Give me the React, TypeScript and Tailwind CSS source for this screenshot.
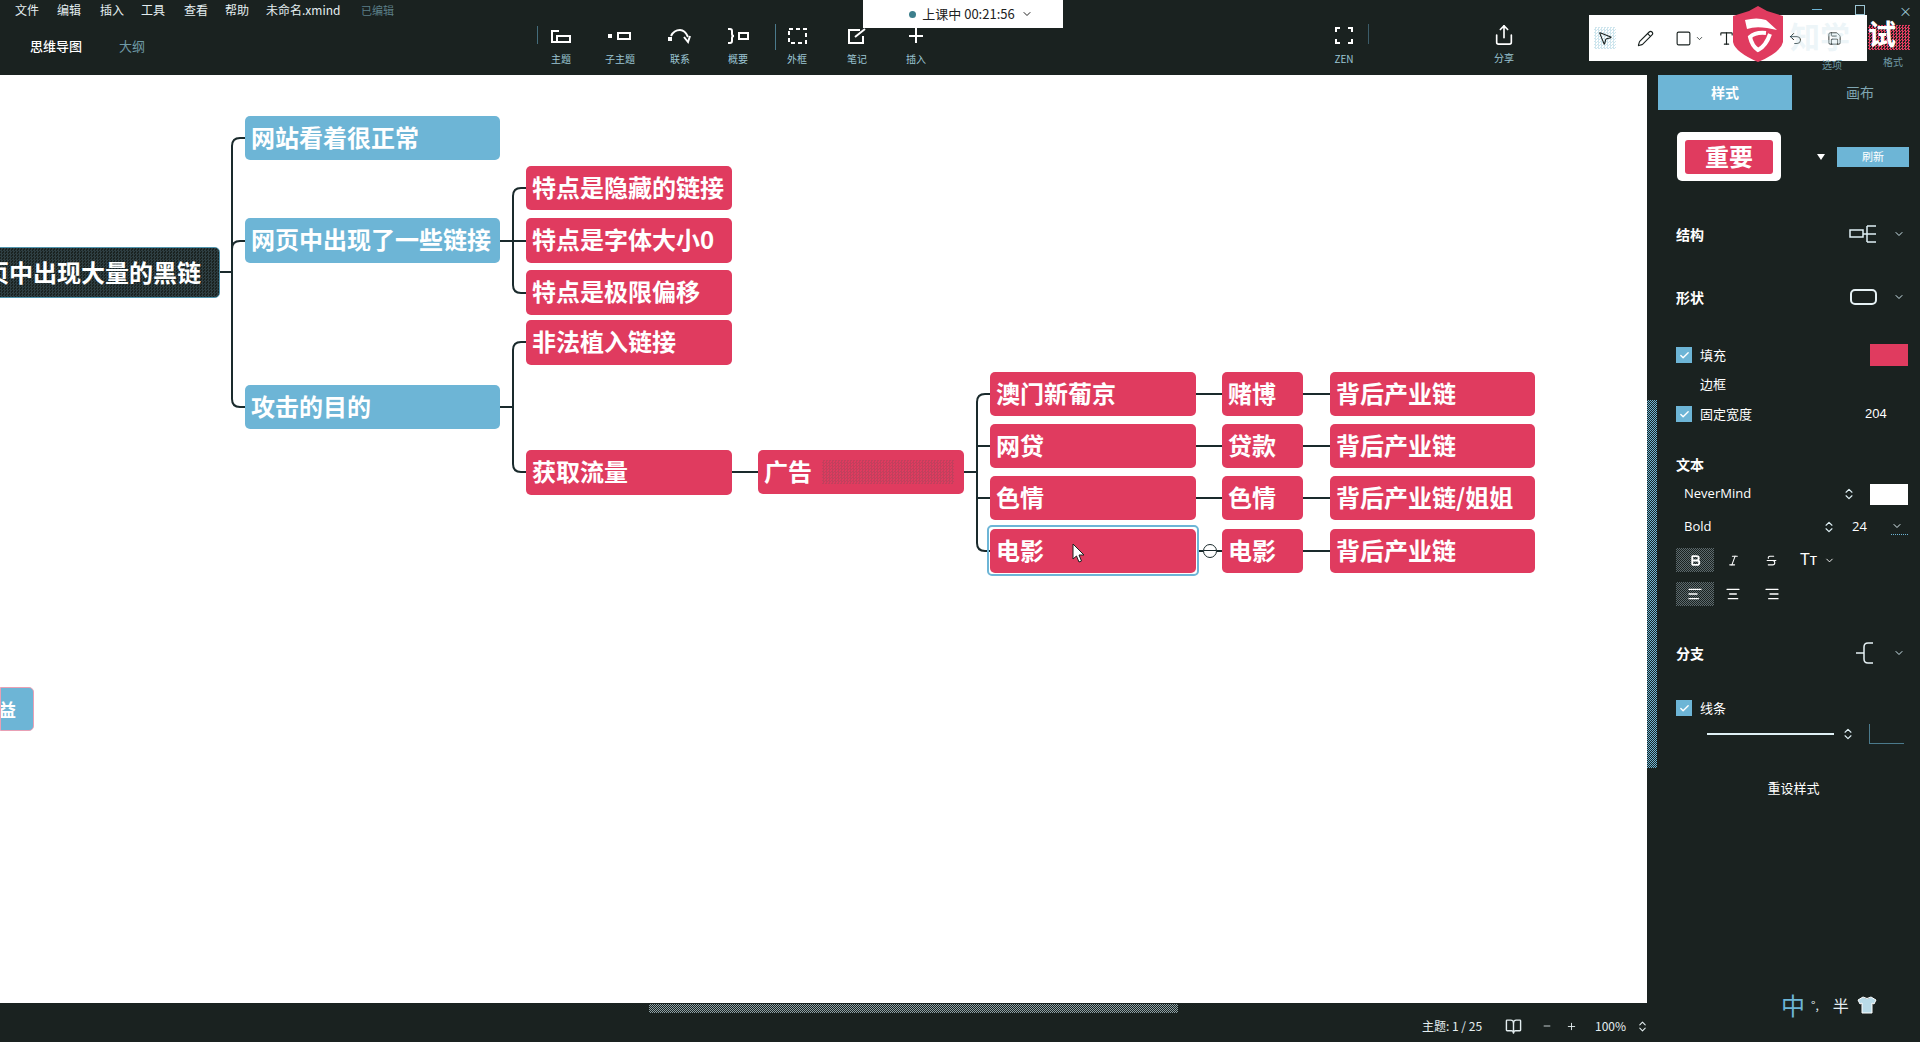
import { ChevronDown, ChevronsUpDown, Plus, Minus, MousePointer2, Pencil, Square, Type, Undo2, BookOpen, Bold, Italic, Strikethrough, AlignLeft, AlignCenter, AlignRight, Check, Share, Save } from 'lucide-react';

const RED = 'bg-[#e03b5f]';
const BLUE = 'bg-[#6db5d6]';

// canvas starts at y=75
const NODES: [string, number, number, number, number, string][] = [
  ['网站看着很正常', 245, 41, 255, 44, BLUE],
  ['网页中出现了一些链接', 245, 143, 255, 45, BLUE],
  ['攻击的目的', 245, 310, 255, 44, BLUE],
  ['特点是隐藏的链接', 526, 91, 206, 44, RED],
  ['特点是字体大小0', 526, 143, 206, 45, RED],
  ['特点是极限偏移', 526, 195, 206, 45, RED],
  ['非法植入链接', 526, 245, 206, 45, RED],
  ['获取流量', 526, 375, 206, 45, RED],
  ['广告', 758, 375, 206, 44, RED],
  ['澳门新葡京', 990, 297, 206, 44, RED],
  ['网贷', 990, 349, 206, 44, RED],
  ['色情', 990, 401, 206, 44, RED],
  ['电影', 990, 454, 206, 44, RED],
  ['赌博', 1222, 297, 81, 44, RED],
  ['贷款', 1222, 349, 81, 44, RED],
  ['色情', 1222, 401, 81, 44, RED],
  ['电影', 1222, 454, 81, 44, RED],
  ['背后产业链', 1330, 297, 205, 44, RED],
  ['背后产业链', 1330, 349, 205, 44, RED],
  ['背后产业链/姐姐', 1330, 401, 205, 44, RED],
  ['背后产业链', 1330, 454, 205, 44, RED],
];

const LINES = [
  'M220 197 H232',
  'M245 63 H240 Q232 63 232 71 V324 Q232 332 240 332 H245',
  'M232 174 Q232 166 240 166 H245',
  'M500 166 H526',
  'M526 113 H521 Q513 113 513 121 V210 Q513 218 521 218 H526',
  'M500 332 H513',
  'M526 267 H521 Q513 267 513 275 V389 Q513 397 521 397 H526',
  'M731 397 H758',
  'M963 397 H976',
  'M990 319 H985 Q977 319 977 327 V468 Q977 476 985 476 H990',
  'M977 371 H990',
  'M977 423 H990',
  'M1196 319 H1222 M1196 371 H1222 M1196 423 H1222 M1303 319 H1330 M1303 371 H1330 M1303 423 H1330 M1303 476 H1330',
  'M1199 476 H1203 M1217 476 H1222',
];

const TOOLS: [string, number][] = [
  ['主题', 561], ['子主题', 620], ['联系', 680], ['概要', 738], ['外框', 797], ['笔记', 857], ['插入', 916],
];

function ToolIcon({ name }: { name: string }) {
  const p = { fill: 'none', stroke: 'white', strokeWidth: 2 };
  return (
    <svg width="24" height="24" viewBox="0 0 24 24">
      {name === '主题' && <><path d="M10 7 H3 V18 H7" {...p} /><rect x="8" y="12" width="13" height="6" {...p} /></>}
      {name === '子主题' && <><rect x="0" y="10" width="4" height="4" fill="white" /><rect x="10" y="9" width="12" height="6" {...p} /></>}
      {name === '联系' && <><path d="M3 12 Q6 6 12 6 Q17 6 20 13" {...p} /><rect x="0" y="13" width="4" height="4" fill="white" /><path d="M16 13 L20 18 L22 12" {...p} /></>}
      {name === '概要' && <><path d="M2 5 H4 Q6 5 6 7 V10 Q6 12 8 12 Q6 12 6 14 V17 Q6 19 4 19 H2" {...p} /><rect x="13" y="9" width="9" height="6" {...p} /></>}
      {name === '外框' && <rect x="4" y="5" width="17" height="14" {...p} strokeDasharray="4 3" />}
      {name === '笔记' && <path d="M15 6 H4 V19 H18 V12 M10 13 L20 5" {...p} />}
      {name === '插入' && <path d="M12 4 V19 M5 12 H19" {...p} />}
    </svg>
  );
}

function Tick({ className }: { className: string }) {
  return (
    <div className={`flex h-4 w-4 items-center justify-center bg-[#6db5d6] ${className}`}>
      <Check size={11} color="white" strokeWidth={3} />
    </div>
  );
}

export default function App() {
  return (
    <div className="relative flex h-screen w-full flex-col overflow-hidden bg-[#1a2220] font-['Noto_Sans_CJK_SC','Liberation_Sans',sans-serif] text-white">
      {/* top bar */}
      <header className="relative h-[75px] shrink-0">
        <div className="flex h-[20px] items-center pl-[15px] text-[12px] text-[#e4eef0]">
          <span className="w-[42px]">文件</span>
          <span className="w-[43px]">编辑</span>
          <span className="w-[41px]">插入</span>
          <span className="w-[43px]">工具</span>
          <span className="w-[41px]">查看</span>
          <span className="w-[41px]">帮助</span>
          <span className="w-[95px]">未命名.xmind</span>
          <span className="text-[11px] text-[#5c7f88]">已编辑</span>
        </div>
        <div className="flex items-center pl-[30px] pt-[16px] text-[13px]">
          <span className="w-[89px] font-medium">思维导图</span>
          <span className="text-[#6f9aa6]">大纲</span>
        </div>

        {TOOLS.map(([label, x]) => (
          <div key={label} className="absolute top-[24px] flex w-[50px] -translate-x-1/2 flex-col items-center" style={{ left: x }}>
            <ToolIcon name={label} />
            <span className="mt-[3px] text-[10px] text-[#9cc6d4]">{label}</span>
          </div>
        ))}
        <div className="absolute left-[1332px] top-[24px] flex w-[24px] flex-col items-center">
          <svg width="24" height="24" viewBox="0 0 24 24" fill="none" stroke="white" strokeWidth="2">
            <path d="M8 4 H4 V8 M16 4 H20 V8 M4 15 V19 H8 M20 15 V19 H16" />
          </svg>
          <span className="mt-[3px] text-[10px] text-[#9cc6d4]">ZEN</span>
        </div>
        <div className="absolute left-[1492px] top-[24px] flex w-[24px] flex-col items-center">
          <Share size={22} color="white" strokeWidth={1.8} />
          <span className="mt-[4px] text-[10px] text-[#9cc6d4]">分享</span>
        </div>
        <div className="absolute left-[537px] top-[26px] h-[18px] w-px bg-[#6db5d6]/50" />
        <div className="absolute left-[775px] top-[24px] h-[26px] w-px bg-[#6db5d6]/60" />
        <div className="absolute left-[1368px] top-[24px] h-[20px] w-px bg-[#6db5d6]/40" />

        {/* class timer pill */}
        <div className="absolute left-[863px] top-0 flex h-[28px] w-[200px] items-center justify-center gap-[6px] bg-white pl-[16px] text-[13px] text-[#222]">
          <span className="h-[7px] w-[7px] rounded-full bg-[#3d7f8c]" />
          <span>上课中 00:21:56</span>
          <ChevronDown size={12} />
        </div>

        {/* window controls */}
        <div className="absolute left-[1812px] top-[9px] h-px w-[10px] bg-[#6db5d6]" />
        <div className="absolute left-[1855px] top-[5px] h-[10px] w-[10px] border border-[#9cc6d4]" />
        <div className="absolute left-[1899px] top-[1px] text-[13px] text-[#9cc6d4]">×</div>

        {/* annotation bar */}
        <div className="absolute left-[1589px] top-[15px] flex h-[46px] w-[278px] items-center bg-white pl-[5px] text-[#1a2220]">
          <div className="flex h-[22px] w-[22px] items-center justify-center bg-[repeating-conic-gradient(#cfe6ee_0_25%,#ffffff_0_50%)] bg-[length:3px_3px]">
            <MousePointer2 size={16} strokeWidth={1.6} />
          </div>
          <Pencil size={17} strokeWidth={1.6} className="ml-[21px]" />
          <Square size={17} strokeWidth={1.6} className="ml-[21px]" />
          <ChevronDown size={9} className="ml-[3px]" />
          <Type size={17} strokeWidth={1.6} className="ml-[14px]" />
          <Undo2 size={15} strokeWidth={1.6} className="ml-[53px]" />
          <Save size={15} strokeWidth={1.4} className="ml-[24px]" />
        </div>
        <div className="absolute left-[1790px] top-[17px] text-[30px] font-bold leading-[36px] text-[#cfe6ee]/40">知学</div>
        <div className="absolute left-[1868px] top-[25px] h-[25px] w-[42px] bg-[repeating-conic-gradient(#e03b5f_0_25%,#1a2220_0_50%)] bg-[length:3px_3px]" />
        <div className="absolute left-[1868px] top-[15px] text-[28px] font-bold leading-[36px] text-white">试</div>
        <svg className="absolute left-[1733px] top-[6px]" width="50" height="56" viewBox="0 0 50 56">
          <path d="M25 0 L34 5 L50 10 V36 Q48 46 25 56 Q2 46 0 36 V10 L16 5 Z" fill="#e03b5f" />
          <path d="M12 14 Q24 11 33 14 L44 24 L34 22 Q22 20 14 23 Z" fill="white" />
          <path d="M33 27 Q22 26 17 31 Q19 40 25 44 Q33 40 37 28" fill="none" stroke="white" strokeWidth="4" />
        </svg>
        <span className="absolute left-[1822px] top-[60px] text-[10px] leading-none text-[#6f9aa6]">选项</span>
        <span className="absolute left-[1883px] top-[57px] text-[10px] leading-none text-[#6f9aa6]">格式</span>
      </header>

      <div className="flex min-h-0 flex-1">
        {/* canvas */}
        <main className="relative w-[1647px] shrink-0 overflow-hidden bg-white">
          <svg className="absolute inset-0 h-full w-full" fill="none" stroke="#1a2a2c" strokeWidth="2">
            {LINES.map((d) => (
              <path key={d} d={d} />
            ))}
          </svg>

          <div className="absolute left-[-40px] top-[172px] flex h-[51px] w-[260px] items-center justify-end rounded-[5px] border border-[#4f94ad] bg-[repeating-conic-gradient(#2e3e42_0_25%,#1a2220_0_50%)] bg-[length:3px_3px] pb-[2px] pr-[18px] text-[24px] font-bold">
            页中出现大量的黑链
          </div>
          <div className="absolute left-0 top-[612px] flex h-[44px] w-[34px] items-center justify-end overflow-hidden rounded-r-[5px] border border-[#e9a0b5] bg-[#6db5d6] pr-[17px] text-[18px] font-bold">
            益
          </div>

          {NODES.map(([label, x, y, w, h, bg], i) => (
            <div
              key={i}
              className={`absolute flex items-center rounded-[5px] pb-[3px] pl-[6px] text-[24px] font-bold leading-none whitespace-nowrap ${bg}`}
              style={{ left: x, top: y, width: w, height: h }}
            >
              {label}
            </div>
          ))}

          {/* selected topic */}
          <div className="absolute left-[987px] top-[450px] h-[51px] w-[212px] rounded-[5px] border-2 border-[#6db5d6]" />
          <div className="absolute left-[1203px] top-[469px] h-[14px] w-[14px] rounded-full border border-[#1a2a2c] bg-white">
            <div className="mt-[5px] h-px w-full bg-[#1a2a2c]" />
          </div>
          <svg className="absolute left-[1072px] top-[468px]" width="13" height="20" viewBox="0 0 13 20">
            <path d="M1 1 V16 L4.5 13 L7 19 L9.5 18 L7 12 H12 Z" fill="white" stroke="#1a2220" strokeWidth="1" />
          </svg>
          <div className="absolute left-[822px] top-[385px] h-[24px] w-[132px] bg-[repeating-conic-gradient(#c2405d_0_25%,#e03b5f_0_50%)] bg-[length:3px_3px]" />
        </main>

        {/* side panel */}
        <aside className="relative flex-1 text-[12px]">
          <div className="absolute left-0 top-[325px] h-[368px] w-[10px] bg-[repeating-conic-gradient(#6db5d6_0_25%,#1a2220_0_50%)] bg-[length:2px_2px]" />
          <div className="flex pl-[11px]">
            <div className="flex h-[35px] w-[134px] items-center justify-center bg-[#6db5d6] text-[14px] font-bold">样式</div>
            <div className="flex h-[35px] flex-1 items-center justify-center pl-[8px] text-[14px] text-[#7fa6b2]">画布</div>
          </div>

          <div className="flex items-center pl-[30px] pt-[22px]">
            <div className="flex h-[49px] w-[104px] items-center justify-center rounded-[5px] bg-white">
              <div className="flex h-[34px] w-[88px] items-center justify-center rounded-[3px] bg-[#e03b5f] pb-[2px] text-[24px] font-bold">重要</div>
            </div>
            <svg className="ml-[36px]" width="8" height="6" viewBox="0 0 8 6"><path d="M0 0 H8 L4 6 Z" fill="white" /></svg>
            <div className="ml-[12px] flex h-[20px] w-[72px] items-center justify-center bg-[#6db5d6] text-[11px]">刷新</div>
          </div>

          <div className="mt-[43px] flex h-[20px] items-center pl-[29px] pr-[15px]">
            <span className="flex-1 text-[14px] font-bold">结构</span>
            <svg width="28" height="20" viewBox="0 0 28 20" fill="none" stroke="#dff0f5" strokeWidth="1.5"><rect x="1" y="6" width="13" height="7" /><path d="M18 10 H27 M18 2 H27 M18 18 H27 M18 2 V18 M14 10 H18" /></svg>
            <ChevronDown size={12} className="ml-[16px]" color="#cfe6ee" />
          </div>

          <div className="mt-[43px] flex h-[20px] items-center pl-[29px] pr-[15px]">
            <span className="flex-1 text-[14px] font-bold">形状</span>
            <div className="h-[16px] w-[27px] rounded-[5px] border-2 border-[#e6f2f5]" />
            <ChevronDown size={12} className="ml-[16px]" color="#cfe6ee" />
          </div>

          <div className="mt-[37px] flex h-[22px] items-center pl-[29px] pr-[12px]">
            <Tick className="shrink-0" />
            <span className="ml-[8px] flex-1 text-[13px]">填充</span>
            <div className="h-[22px] w-[38px] bg-[#e03b5f]" />
          </div>
          <div className="mt-[7px] flex h-[22px] items-center pl-[53px] text-[13px]">边框</div>
          <div className="mt-[8px] flex h-[22px] items-center pl-[29px]">
            <Tick className="shrink-0" />
            <span className="ml-[8px] w-[165px] text-[13px]">固定宽度</span>
            <span className="text-[13px] font-['Liberation_Sans',sans-serif]">204</span>
          </div>

          <div className="mt-[29px] flex h-[20px] items-center pl-[29px] text-[14px] font-bold">文本</div>
          <div className="mt-[9px] flex h-[22px] items-center pl-[37px] pr-[12px] text-[13px]">
            <span className="flex-1 font-['Open_Sans',sans-serif]">NeverMind</span>
            <ChevronsUpDown size={14} className="mr-[14px]" color="#dff0f5" />
            <div className="h-[21px] w-[38px] bg-white" />
          </div>
          <div className="mt-[11px] flex h-[22px] items-center pl-[37px] pr-[12px] text-[13px]">
            <span className="flex-1 font-['Open_Sans',sans-serif]">Bold</span>
            <ChevronsUpDown size={14} color="#dff0f5" />
            <span className="ml-[16px] w-[39px] font-['Open_Sans',sans-serif]">24</span>
            <div className="w-[17px] border-b border-dotted border-[#6db5d6] pb-[2px]">
              <ChevronDown size={12} color="#dff0f5" />
            </div>
          </div>
          <div className="mt-[10px] flex h-[24px] items-center pl-[29px]">
            <div className="flex h-[24px] w-[38px] items-center justify-center bg-[repeating-conic-gradient(#5d6a6e_0_25%,#1a2220_0_50%)] bg-[length:2px_2px]">
              <Bold size={13} strokeWidth={3.5} />
            </div>
            <Italic size={13} className="ml-[13px]" />
            <Strikethrough size={13} className="ml-[25px]" />
            <span className="ml-[22px] text-[16px] font-['Liberation_Sans',sans-serif]">Tт</span>
            <ChevronDown size={11} className="ml-[7px]" />
          </div>
          <div className="mt-[10px] flex h-[24px] items-center pl-[29px]">
            <div className="flex h-[24px] w-[38px] items-center justify-center bg-[repeating-conic-gradient(#5d6a6e_0_25%,#1a2220_0_50%)] bg-[length:2px_2px]">
              <AlignLeft size={16} />
            </div>
            <AlignCenter size={16} className="ml-[11px]" />
            <AlignRight size={16} className="ml-[23px]" />
          </div>

          <div className="mt-[37px] flex h-[20px] items-center pl-[29px] pr-[15px]">
            <span className="flex-1 text-[14px] font-bold">分支</span>
            <svg width="18" height="22" viewBox="0 0 18 22" fill="none" stroke="#e6f2f5" strokeWidth="1.5"><path d="M0 11 H8 M17 1 H12 Q8 1 8 5 V17 Q8 21 12 21 H17" /></svg>
            <ChevronDown size={12} className="ml-[19px]" color="#cfe6ee" />
          </div>

          <div className="mt-[35px] flex h-[20px] items-center pl-[29px]">
            <Tick className="shrink-0" />
            <span className="ml-[8px] text-[13px]">线条</span>
          </div>
          <div className="mt-[6px] flex h-[20px] items-center pl-[60px]">
            <div className="h-[2px] w-[127px] shrink-0 bg-[#dff0f5]" />
            <ChevronsUpDown size={14} className="ml-[7px] shrink-0" color="#dff0f5" />
            <div className="ml-[14px] h-[20px] w-[35px] shrink-0 border-b border-l border-[#6db5d6]/60" />
          </div>
          <div className="mt-[34px] pl-[20px] text-center text-[13px]">
            <span>重设样式</span>
          </div>
        </aside>
      </div>

      {/* status bar */}
      <footer className="relative flex h-[39px] shrink-0 items-center pl-[1422px] pt-[7px] text-[12px] text-[#e4eef0]">
        <span className="w-[83px]">主题: 1 / 25</span>
        <BookOpen size={17} />
        <Minus size={10} className="ml-[20px]" />
        <Plus size={11} className="ml-[14px]" />
        <span className="ml-[18px] w-[38px]">100%</span>
        <ChevronsUpDown size={13} className="ml-[3px]" />
        <div className="absolute left-[649px] top-[1px] h-[9px] w-[529px] bg-[repeating-conic-gradient(#8fa2a6_0_25%,#1a2220_0_50%)] bg-[length:2px_2px]" />
        <div className="absolute left-[1781px] top-[-12px] flex items-center">
          <span className="text-[24px] leading-[28px] text-[#6db5d6]">中</span>
          <span className="ml-[6px] text-[12px]">°,</span>
          <span className="ml-[14px] text-[16px]">半</span>
          <svg className="ml-[8px]" width="20" height="18" viewBox="0 0 20 18">
            <path d="M6 1 L1 4 L3 8 L5 7 V17 H15 V7 L17 8 L19 4 L14 1 Q10 4 6 1 Z" fill="#b9dbe8" stroke="white" strokeWidth="1" />
          </svg>
        </div>
      </footer>
    </div>
  );
}
